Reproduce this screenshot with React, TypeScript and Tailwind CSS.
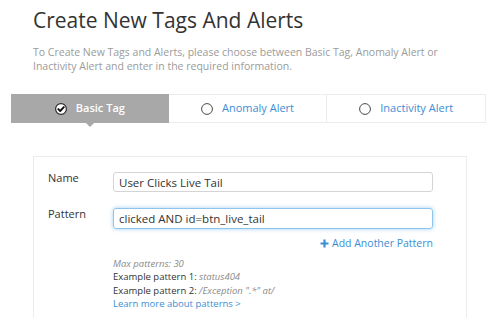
import type { ReactNode } from 'react'

const font = { fontFamily: '"Open Sans", "Liberation Sans", sans-serif' }

function CheckCircle() {
  return (
    <svg width="12" height="12" viewBox="0 0 12 12" aria-hidden="true">
      <circle cx="6" cy="6" r="5.4" fill="#ffffff" stroke="#2b2b2b" strokeWidth="1.2" />
      <path d="M3.3 6.1 L5.2 8 L8.8 4.1" fill="none" stroke="#111111" strokeWidth="1.9" strokeLinecap="round" strokeLinejoin="round" />
    </svg>
  )
}

function Radio() {
  return (
    <svg width="12" height="12" viewBox="0 0 12 12" aria-hidden="true">
      <circle cx="6" cy="6" r="5.4" fill="#ffffff" stroke="#4a4a4a" strokeWidth="1" />
    </svg>
  )
}

interface TabProps {
  label: string
  active?: boolean
}

function Tab({ label, active = false }: TabProps) {
  if (active) {
    return (
      <div className="relative flex flex-1 items-center justify-center gap-[9px] bg-[#a8a8a8]">
        <CheckCircle />
        <span className="text-[11px] font-semibold text-white">{label}</span>
        <span className="absolute left-1/2 top-full h-0 w-0 -translate-x-1/2 border-x-[4px] border-t-[4px] border-x-transparent border-t-[#a8a8a8]" />
      </div>
    )
  }
  return (
    <div className="flex flex-1 items-center justify-center gap-[9px] border border-l-0 border-[#ececec] bg-white">
      <Radio />
      <span className="text-[11px] text-[#3c8ed3]">{label}</span>
    </div>
  )
}

function Field({ label, children }: { label: string; children: ReactNode }) {
  return (
    <div className="flex">
      <div className="w-[65px] text-[11px] leading-[12px] text-[#333]">{label}</div>
      <div className="w-[320px]">{children}</div>
    </div>
  )
}

export default function App() {
  return (
    <div className="h-[318px] w-full overflow-hidden bg-white" style={font}>
      <div className="pl-[33px] pt-[6px]">
        <h1 className="text-[21px] leading-[28px] text-[#333]">Create New Tags And Alerts</h1>
        <p className="mt-[11px] w-[440px] text-[10.5px] leading-[14px] text-[#9b9b9b]">
          To Create New Tags and Alerts, please choose between Basic Tag, Anomaly Alert or Inactivity Alert and enter in the required information.
        </p>
      </div>

      <div className="ml-[11px] mt-[21px] flex h-[29px] w-[475px]">
        <Tab label="Basic Tag" active />
        <Tab label="Anomaly Alert" />
        <Tab label="Inactivity Alert" />
      </div>

      <div className="ml-[33px] mt-[33px] h-[200px] w-[434px] border border-[#ececec] px-[14px] pt-[15px]">
        <div className="flex flex-col gap-[16px]">
          <Field label="Name">
            <input
              readOnly
              value="User Clicks Live Tail"
              className="block h-[20px] w-full rounded-[3px] border border-[#d4d4d4] px-[5px] text-[11.5px] text-[#333] outline-none"
            />
          </Field>
          <Field label="Pattern">
            <input
              readOnly
              value="clicked AND id=btn_live_tail"
              className="block h-[21px] w-full rounded-[3px] border border-[#8ec5ee] px-[5px] text-[11.5px] text-[#333] shadow-[0_0_4px_rgba(102,175,233,0.6)] outline-none"
            />
          </Field>
        </div>

        <div className="ml-[65px] w-[320px]">
          <div className="mt-[7px] flex items-center justify-end gap-[3px] text-[10.5px] leading-[14px] text-[#3c8ed3]">
            <svg width="9" height="9" viewBox="0 0 9 9" aria-hidden="true">
              <path d="M4.5 0.5 V8.5 M0.5 4.5 H8.5" stroke="#3c8ed3" strokeWidth="2.2" />
            </svg>
            <span>Add Another Pattern</span>
          </div>

          <div className="mt-[7px] text-[9.5px] leading-[13.3px] text-[#333]">
            <p className="italic text-[#8a8a8a]">Max patterns: 30</p>
            <p>
              Example pattern 1: <span className="italic text-[#8a8a8a]">status404</span>
            </p>
            <p>
              Example pattern 2: <span className="italic text-[#8a8a8a]">/Exception ".*" at/</span>
            </p>
            <p className="text-[#3c8ed3]">Learn more about patterns &gt;</p>
          </div>
        </div>
      </div>
    </div>
  )
}
